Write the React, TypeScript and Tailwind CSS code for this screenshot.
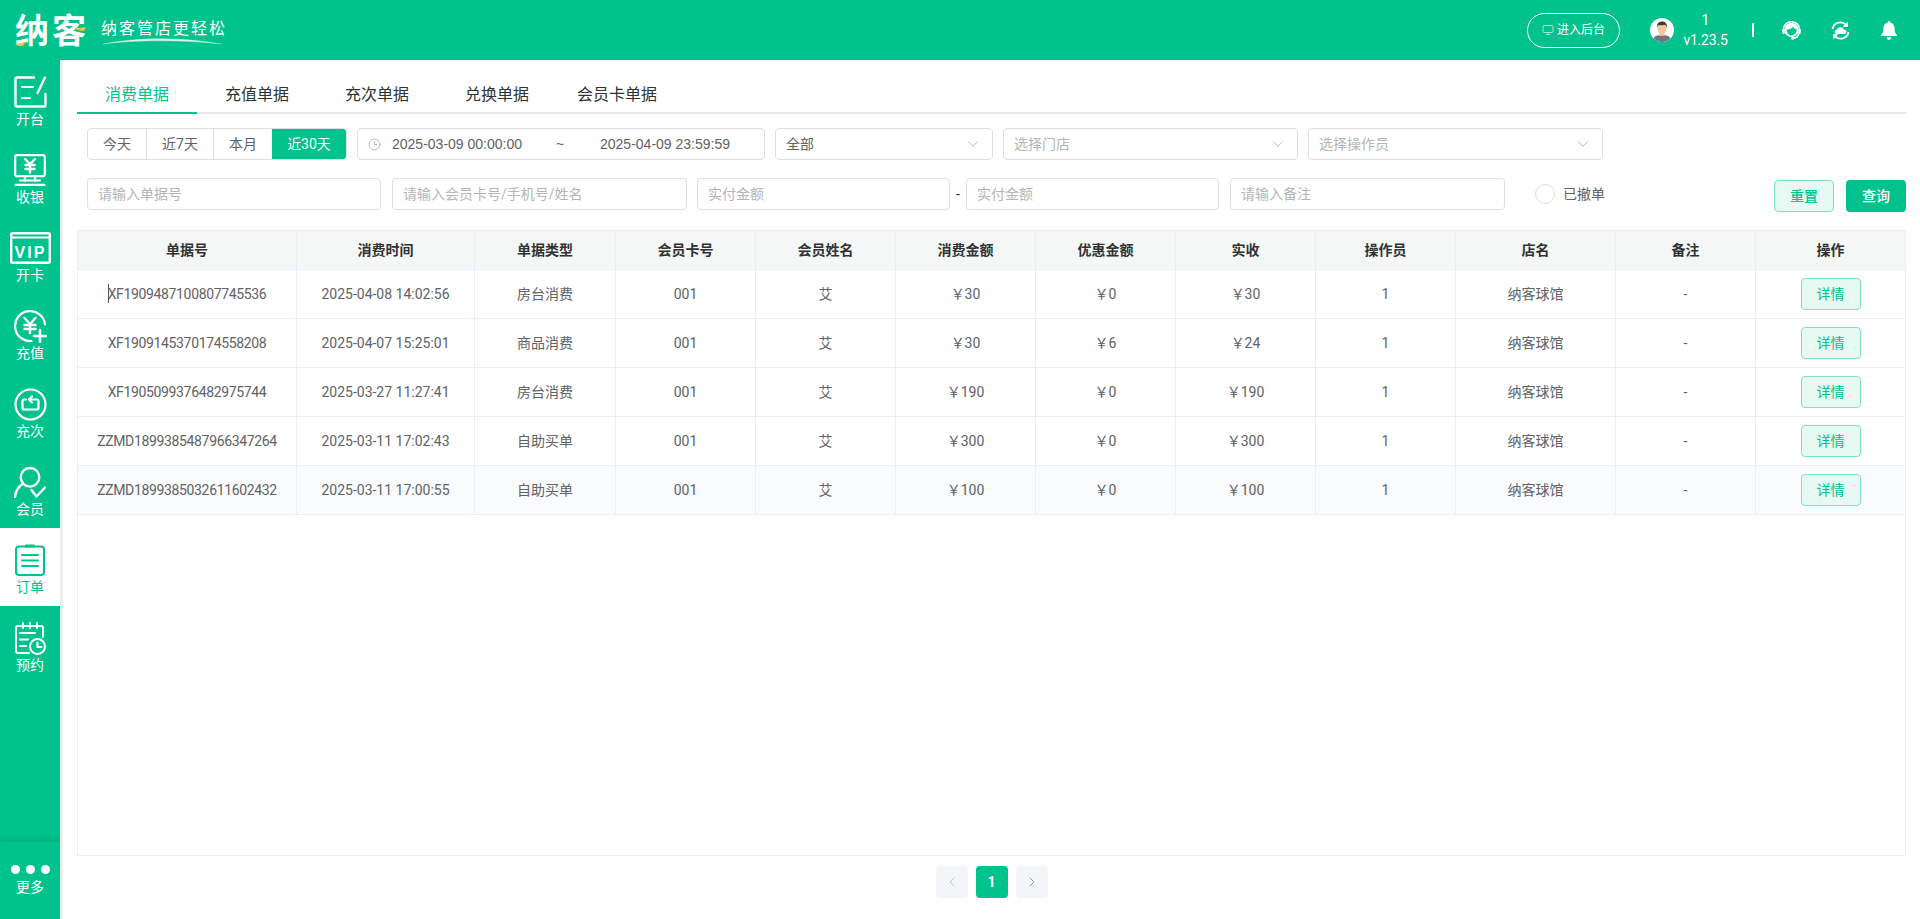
import React from 'react';
import { ChevronDown, ChevronLeft, ChevronRight, Clock3, Monitor } from 'lucide-react';

const FONT = "font-['Roboto','Noto_Sans_CJK_SC',sans-serif]";

const columns = ['单据号', '消费时间', '单据类型', '会员卡号', '会员姓名', '消费金额', '优惠金额', '实收', '操作员', '店名', '备注', '操作'];

const rows = [
  ['XF1909487100807745536', '2025-04-08 14:02:56', '房台消费', '001', '艾', '￥30', '￥0', '￥30', '1', '纳客球馆', '-'],
  ['XF1909145370174558208', '2025-04-07 15:25:01', '商品消费', '001', '艾', '￥30', '￥6', '￥24', '1', '纳客球馆', '-'],
  ['XF1905099376482975744', '2025-03-27 11:27:41', '房台消费', '001', '艾', '￥190', '￥0', '￥190', '1', '纳客球馆', '-'],
  ['ZZMD1899385487966347264', '2025-03-11 17:02:43', '自助买单', '001', '艾', '￥300', '￥0', '￥300', '1', '纳客球馆', '-'],
  ['ZZMD1899385032611602432', '2025-03-11 17:00:55', '自助买单', '001', '艾', '￥100', '￥0', '￥100', '1', '纳客球馆', '-'],
];

const gridCols = 'grid grid-cols-[219px_178px_141px_140px_140px_140px_140px_140px_140px_160px_140px_1fr]';

const OpenIcon = () => (
  <svg width="33" height="32" viewBox="0 0 33 32" fill="none" stroke="currentColor" strokeWidth="2.4" strokeLinecap="round" strokeLinejoin="round">
    <path d="M20 1.500H3a1.500 1.500 0 0 0-1.500 1.500V29A1.500 1.500 0 0 0 3 30.500h27a1.500 1.500 0 0 0 1.500-1.500V18" />
    <path d="M8 11h11M8 22h8" strokeWidth="2" />
    <path d="M31 1.500 23.500 17" />
  </svg>
);

const CashIcon = () => (
  <svg width="32" height="32" viewBox="0 0 32 32" fill="none" stroke="currentColor" strokeWidth="2.200" strokeLinecap="round">
    <rect x="1.200" y="1.200" width="29.600" height="21" rx="2" />
    <path d="M11 5l5 5 5-5M16 10v8.500M11.500 11h9M11.500 15h9" strokeWidth="2.400" />
    <path d="M11 22.500v4.500M21 22.500v4.500M6 26.500h20M1.500 30.800h29" />
  </svg>
);

const VipIcon = () => (
  <svg width="41" height="32" viewBox="0 0 41 32" fill="none">
    <rect x="1.200" y="1.200" width="38.600" height="29.600" rx="1.500" stroke="currentColor" strokeWidth="2.400" />
    <path d="M1 5.500h39" stroke="currentColor" strokeWidth="2" />
    <text x="20.500" y="25.500" textAnchor="middle" fill="currentColor" fontSize="16" fontWeight="700" letterSpacing="2" fontFamily="Liberation Sans, sans-serif">VIP</text>
  </svg>
);

const RechargeIcon = () => (
  <svg width="33" height="33" viewBox="0 0 33 33" fill="none" stroke="currentColor" strokeWidth="2.200" strokeLinecap="round">
    <path d="M31 14.500A15 15 0 1 0 17.500 31" />
    <path d="M10.500 8l5.500 6 5.500-6M16 14v9M10.500 15h11M10.500 19h11" strokeWidth="2.400" />
    <path d="M26 20v12M20 26h12" strokeWidth="2.600" />
  </svg>
);

const TimesIcon = () => (
  <svg width="33" height="33" viewBox="0 0 33 33" fill="none" stroke="currentColor" strokeWidth="2.200" strokeLinecap="round" strokeLinejoin="round">
    <circle cx="16.500" cy="16.500" r="15" />
    <path d="M12 11.500H10a1.500 1.500 0 0 0-1.500 1.500v7a1.500 1.500 0 0 0 1.500 1.500h13a1.500 1.500 0 0 0 1.500-1.500v-7a1.500 1.500 0 0 0-1.500-1.500h-7" />
    <path d="M18 8.500l-3 3 3 3" />
  </svg>
);

const MemberIcon = () => (
  <svg width="32" height="33" viewBox="0 0 32 33" fill="none" stroke="currentColor" strokeWidth="2.400" strokeLinecap="round" strokeLinejoin="round">
    <circle cx="16" cy="11.300" r="9.300" />
    <path d="M8.500 18C4 21 1.500 25.500 1 31" />
    <path d="M17.500 24l5 6.500 8.500-9" />
  </svg>
);

const OrderIcon = () => (
  <svg width="30" height="32" viewBox="0 0 30 32" fill="none" stroke="#00c28c" strokeLinecap="round">
    <rect x="1" y="2.500" width="28" height="28.500" rx="3" strokeWidth="2" />
    <rect x="10" y="0.500" width="10" height="3" rx="1.200" fill="#00c28c" stroke="none" />
    <path d="M7 11h16M7 16.500h16M7 22h16" strokeWidth="2" />
  </svg>
);

const BookingIcon = () => (
  <svg width="31" height="33" viewBox="0 0 31 33" fill="none" stroke="currentColor" strokeWidth="2" strokeLinecap="round">
    <path d="M14 31H3a2 2 0 0 1-2-2V6a2 2 0 0 1 2-2h23a2 2 0 0 1 2 2v9" />
    <path d="M8 1v5M15 1v5M22 1v5" />
    <path d="M5 11h15M5 17.500h8M5 24h6" />
    <circle cx="22.500" cy="24.500" r="7.500" />
    <path d="M22.500 20.500v4.500h4" strokeWidth="2.200" />
  </svg>
);

const navItems = [
  { label: '开台', icon: <OpenIcon /> },
  { label: '收银', icon: <CashIcon /> },
  { label: '开卡', icon: <VipIcon /> },
  { label: '充值', icon: <RechargeIcon /> },
  { label: '充次', icon: <TimesIcon /> },
  { label: '会员', icon: <MemberIcon /> },
  { label: '订单', icon: <OrderIcon />, active: true },
  { label: '预约', icon: <BookingIcon /> },
];

const Input = ({ w, text }: { w: string; text: string }) => (
  <div className={`${w} h-8 flex items-center pl-[10px] border border-[#dcdfe6] rounded text-sm text-[#b3b5ba] shrink-0`}>{text}</div>
);

const Select = ({ w, text, filled }: { w: string; text: string; filled?: boolean }) => (
  <div className={`${w} h-8 flex items-center justify-between pl-[10px] pr-[10px] border border-[#dcdfe6] rounded text-sm shrink-0 ${filled ? 'text-[#606266]' : 'text-[#b3b5ba]'}`}>
    {text}
    <ChevronDown size={18} strokeWidth={1.1} className="text-[#a8aab0]" />
  </div>
);

const Logo = () => (
  <div className="flex items-center ml-[15px]">
    <div className="relative w-[72px] h-[36px] mt-[2px]">
      <span className="text-[34px] leading-[36px] font-bold text-white tracking-[3px] whitespace-nowrap">纳客</span>
      <svg className="absolute left-0 top-0" width="72" height="36" viewBox="0 0 72 36" fill="none">
        <path d="M0 31c4 0 8-1 11-3l-3 5c-3 0-6 0-8-2z" fill="#f6c33a" />
        <path d="M59 15c4 0 8 0 12-1l-2 4c-4 0-7-1-10-3z" fill="#f6c33a" />
      </svg>
    </div>
    <div className="relative ml-[14px] w-[124px] h-[36px]">
      <span className="absolute left-0 top-[5px] text-[16px] leading-[20px] text-white font-['Noto_Sans_CJK_SC',serif] tracking-[2px] whitespace-nowrap">纳客管店更轻松</span>
      <svg className="absolute left-0 top-[25px]" width="124" height="10" viewBox="0 0 124 10" fill="none">
        <path d="M2 7C30 1 78-1 120 7C80 2.500 34 3 2 7z" fill="#fff" stroke="#fff" strokeWidth="0.300" opacity="0.850" />
      </svg>
    </div>
  </div>
);

const Avatar = () => (
  <svg width="24" height="24" viewBox="0 0 24 24">
    <circle cx="12" cy="12" r="12" fill="#fff" />
    <path d="M3.500 20.500C5 17.500 8 17 12 17s7 .5 8.500 3.500A12 12 0 0 1 3.500 20.500z" fill="#70757d" />
    <rect x="9.500" y="13.500" width="5" height="4.500" fill="#f0b890" />
    <ellipse cx="12" cy="10.500" rx="4.600" ry="5.500" fill="#f5c6a0" />
    <path d="M7 10C6.500 5.500 9 3.500 12 3.500s5.500 2 5 6.500c-.5-2-1.500-3-2.500-3.300-2 .6-5 .6-6 .3C7.700 7.300 7.300 8.500 7 10z" fill="#3a3a3a" />
  </svg>
);

const HeadsetIcon = () => (
  <svg width="19" height="19" viewBox="0 0 19 19" fill="none">
    <circle cx="9.500" cy="9" r="7.200" fill="#fff" />
    <path d="M4.800 8.500C7 9 9.500 7.800 11 5.800c1 1.500 2.300 2.300 3.600 2.500.4 3.200-1.800 6-5 6.200-2.600 0-4.800-2.600-4.800-5.500z" fill="#00c28c" />
    <path d="M1.200 11V9a8.300 8.300 0 0 1 16.600 0v2" stroke="#fff" strokeWidth="1.500" />
    <rect x="0.300" y="8" width="2.400" height="5" rx="1" fill="#fff" />
    <rect x="16.300" y="8" width="2.400" height="5" rx="1" fill="#fff" />
    <path d="M17 12.500c-.8 2.800-3 4.500-5.500 4.700" stroke="#fff" strokeWidth="1.500" />
    <circle cx="10.500" cy="17.200" r="1.500" fill="#fff" />
  </svg>
);

const SyncIcon = () => (
  <svg width="19" height="19" viewBox="0 0 19 19" fill="none">
    <path d="M1.500 8A8 8 0 0 1 15.500 4.200M17.500 11A8 8 0 0 1 3.500 14.800" stroke="#fff" strokeWidth="1.800" />
    <path d="M17 .5v5.500h-5.500zM2 18.500V13h5.500z" fill="#fff" />
    <path d="M6 13c-1.300 0-2.300-.9-2.300-2.100S4.600 8.800 5.700 8.700C6.100 7.200 7.500 6.300 9.200 6.300c1.700 0 3 .9 3.600 2.300 1.500.1 2.700 1 2.700 2.200S14.400 13 13 13z" fill="#fff" />
  </svg>
);

const BellIcon = () => (
  <svg width="16" height="19" viewBox="0 0 16 19" fill="#fff">
    <path d="M8 0c.8 0 1.300.6 1.300 1.400C12 2 13.600 4.300 13.600 7.200c0 3 .5 5 2.400 7V15H0v-.8c1.900-2 2.400-4 2.400-7C2.400 4.300 4 2 6.700 1.400 6.700 .6 7.200 0 8 0z" />
    <path d="M5.600 16.200h4.800C10.200 17.800 9.200 18.800 8 18.800s-2.200-1-2.400-2.600z" />
  </svg>
);

export default function App() {
  return (
    <div className={`w-[1920px] h-[919px] flex flex-col overflow-hidden bg-white ${FONT}`}>
      <header className="h-[60px] shrink-0 bg-[#00c28c] flex items-center justify-between text-white">
        <Logo />
        <div className="flex items-center pr-[23px]">
          <button className="w-[93px] h-[35px] rounded-full border border-white flex items-center justify-center gap-[3px] text-xs">
            <Monitor size={12} strokeWidth={1.5} className="text-[#c8f3e6]" />
            进入后台
          </button>
          <div className="ml-[30px]"><Avatar /></div>
          <div className="ml-[10px] w-[43px] flex flex-col items-center text-sm leading-[20px] whitespace-nowrap">
            <span>1</span>
            <span className="tracking-[-0.2px]">v1.23.5</span>
          </div>
          <div className="ml-[25px] w-[2px] h-[14px] bg-white" />
          <div className="ml-[28px]"><HeadsetIcon /></div>
          <div className="ml-[30px]"><SyncIcon /></div>
          <div className="ml-[31px]"><BellIcon /></div>
        </div>
      </header>

      <div className="flex-1 flex min-h-0">
        <aside className="w-[60px] shrink-0 bg-[#00c28c] flex flex-col text-white">
          {navItems.map((item) => (
            <div
              key={item.label}
              className={`h-[78px] shrink-0 pt-4 flex flex-col items-center ${item.active ? 'bg-white text-[#00c28c]' : ''}`}
            >
              <div className="h-8 flex items-center justify-center">{item.icon}</div>
              <span className="text-sm leading-5 mt-[1px]">{item.label}</span>
            </div>
          ))}
          <div className="mt-auto h-[78px] shrink-0 border-t border-[#00b483] shadow-[0_-3px_4px_rgba(0,90,60,0.12)] flex flex-col items-center">
            <div className="flex gap-[6px] mt-[23px]">
              <span className="w-[9px] h-[9px] rounded-full bg-white" />
              <span className="w-[9px] h-[9px] rounded-full bg-white" />
              <span className="w-[9px] h-[9px] rounded-full bg-white" />
            </div>
            <span className="text-sm leading-5 mt-[3px]">更多</span>
          </div>
        </aside>
        <div className="w-[3px] shrink-0 bg-[#eeeeee]" />

        <main className="flex-1 min-w-0 px-[14px] flex flex-col">
          <div className="flex border-b-2 border-[#e4e7ed] mt-[23px]">
            {['消费单据', '充值单据', '充次单据', '兑换单据', '会员卡单据'].map((tab, i) => (
              <div
                key={tab}
                className={`w-[120px] text-center text-base leading-6 pb-[5px] -mb-[2px] border-b-2 ${i === 0 ? 'text-[#00c28c] border-[#00c28c]' : 'text-[#303133] border-transparent'}`}
              >
                {tab}
              </div>
            ))}
          </div>

          <div className="pl-[10px] mt-[14px] flex gap-[10px]">
            <div className="w-[260px] h-8 flex text-sm text-[#606266] border border-[#dcdfe6] rounded overflow-hidden shrink-0">
              <div className="w-[59px] flex items-center justify-center border-r border-[#dcdfe6]">今天</div>
              <div className="w-[67px] flex items-center justify-center border-r border-[#dcdfe6]">近7天</div>
              <div className="w-[58px] flex items-center justify-center">本月</div>
              <div className="flex-1 flex items-center justify-center bg-[#00c28c] text-white">近30天</div>
            </div>
            <div className="w-[408px] h-8 flex items-center border border-[#dcdfe6] rounded text-sm text-[#606266] font-['Liberation_Sans','Noto_Sans_CJK_SC',sans-serif] shrink-0">
              <Clock3 size={13} strokeWidth={1.5} className="ml-[10px] text-[#a8aab0]" />
              <span className="ml-[11px] w-[130px]">2025-03-09 00:00:00</span>
              <span className="ml-[34px] w-[8px]">~</span>
              <span className="ml-[36px]">2025-04-09 23:59:59</span>
            </div>
            <Select w="w-[218px]" text="全部" filled />
            <Select w="w-[295px]" text="选择门店" />
            <Select w="w-[295px]" text="选择操作员" />
          </div>

          <div className="pl-[10px] mt-[18px] flex items-start">
            <Input w="w-[294px]" text="请输入单据号" />
            <div className="ml-[11px]"><Input w="w-[295px]" text="请输入会员卡号/手机号/姓名" /></div>
            <div className="ml-[10px]"><Input w="w-[253px]" text="实付金额" /></div>
            <span className="w-[16px] text-center text-sm leading-8 text-[#303133]">-</span>
            <Input w="w-[253px]" text="实付金额" />
            <div className="ml-[11px]"><Input w="w-[275px]" text="请输入备注" /></div>
            <div className="ml-[30px] h-8 flex items-center text-sm text-[#606266]">
              <span className="w-5 h-5 rounded-full border border-[#dcdfe6]" />
              <span className="ml-2">已撤单</span>
            </div>
            <div className="ml-auto flex gap-3 mt-[2px]">
              <button className="w-[60px] h-8 rounded bg-[#e6f9f3] border border-[#80e0c5] text-sm font-medium text-[#00c28c]">重置</button>
              <button className="w-[60px] h-8 rounded bg-[#00c28c] text-sm font-medium text-white">查询</button>
            </div>
          </div>

          <div className="mt-[18px] h-[626px] border border-[#ebeef5] shrink-0">
            <div className={`${gridCols} h-[39px] bg-[#f5f7f7] border-b border-[#ebeef5]`}>
              {columns.map((c, i) => (
                <div
                  key={c}
                  className={`flex items-center justify-center text-sm font-bold text-[#303133] ${i < columns.length - 1 ? 'border-r border-[#ebeef5]' : ''}`}
                >
                  {c}
                </div>
              ))}
            </div>
            {rows.map((row, r) => (
              <div key={row[0]} className={`${gridCols} h-[49px] border-b border-[#ebeef5] ${r === 4 ? 'bg-[#fafbfd]' : ''}`}>
                {row.map((cell, i) => (
                  <div
                    key={i}
                    className={`relative flex items-center justify-center text-sm text-[#606266] border-r border-[#ebeef5] ${i === 0 ? 'tracking-[-0.35px]' : ''}`}
                  >
                    {cell}
                    {r === 0 && i === 0 && <span className="absolute left-[30px] top-[14px] w-px h-[19px] bg-[#555]" />}
                  </div>
                ))}
                <div className="flex items-center justify-center">
                  <button className="w-[60px] h-8 rounded bg-[#e6f9f3] border border-[#80e0c5] text-sm text-[#00c28c]">详情</button>
                </div>
              </div>
            ))}
          </div>

          <div className="mt-[10px] flex justify-center gap-2">
            <div className="w-8 h-8 rounded-sm bg-[#f4f5f9] flex items-center justify-center text-[#c0c4cc]">
              <ChevronLeft size={16} strokeWidth={1.5} />
            </div>
            <div className="w-8 h-8 rounded-sm bg-[#00c28c] flex items-center justify-center text-sm font-bold text-white">1</div>
            <div className="w-8 h-8 rounded-sm bg-[#f4f5f9] flex items-center justify-center text-[#9a9da5]">
              <ChevronRight size={16} strokeWidth={1.5} />
            </div>
          </div>
        </main>
      </div>
    </div>
  );
}
